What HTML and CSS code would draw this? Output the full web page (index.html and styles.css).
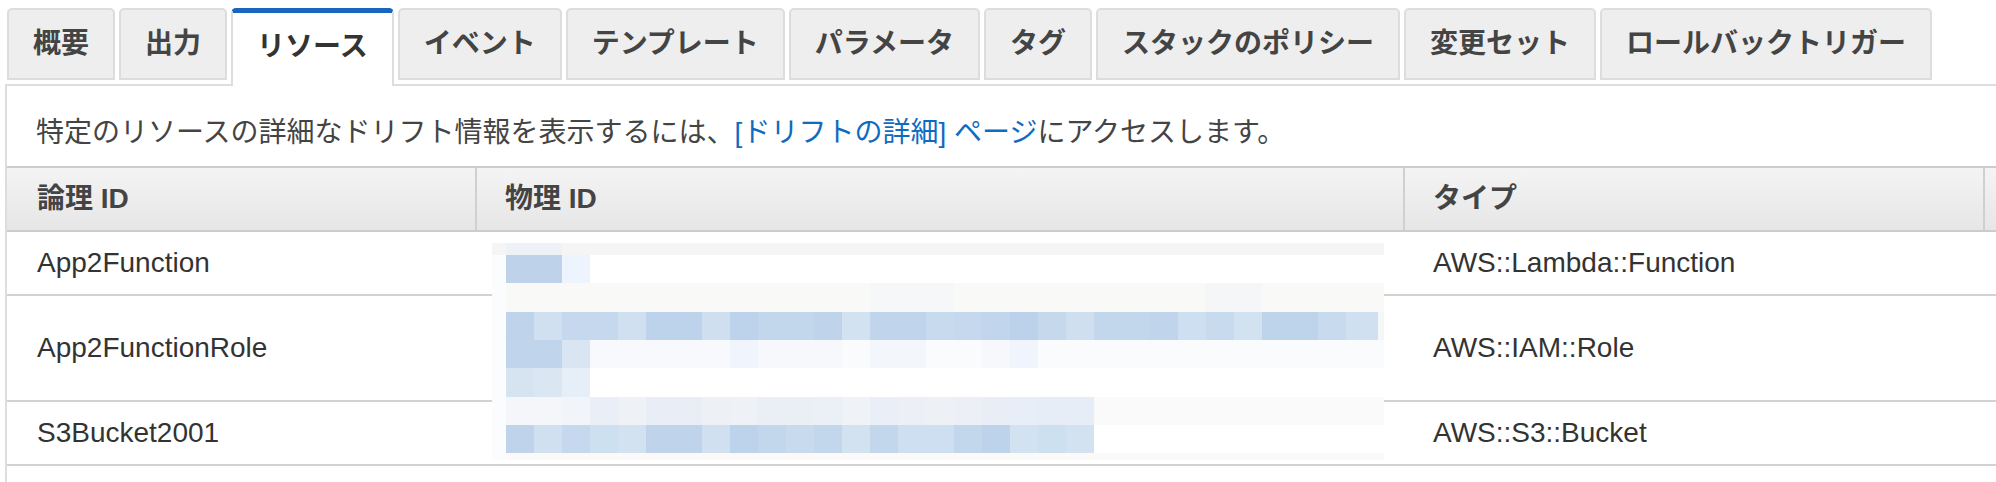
FILE: index.html
```html
<!DOCTYPE html>
<html lang="ja">
<head>
<meta charset="utf-8">
<title>リソース</title>
<link rel="stylesheet" href="styles.css">
</head>
<body>
<div class="tabs">
  <div class="tab">概要</div>
  <div class="tab">出力</div>
  <div class="tab active">リソース</div>
  <div class="tab">イベント</div>
  <div class="tab">テンプレート</div>
  <div class="tab">パラメータ</div>
  <div class="tab">タグ</div>
  <div class="tab">スタックのポリシー</div>
  <div class="tab">変更セット</div>
  <div class="tab">ロールバックトリガー</div>
</div>
<div class="panel">
  <p class="desc">特定のリソースの詳細なドリフト情報を表示するには、<a class="link" href="#">[ドリフトの詳細] ページ</a>にアクセスします。</p>
  <div class="table">
    <div class="row head">
      <div class="cell">論理 ID</div>
      <div class="cell">物理 ID</div>
      <div class="cell">タイプ</div>
      <div class="cell"></div>
    </div>
    <div class="row">
      <div class="cell">App2Function</div>
      <div class="cell"></div>
      <div class="cell">AWS::Lambda::Function</div>
      <div class="cell"></div>
    </div>
    <div class="row tall">
      <div class="cell">App2FunctionRole</div>
      <div class="cell"></div>
      <div class="cell">AWS::IAM::Role</div>
      <div class="cell"></div>
    </div>
    <div class="row">
      <div class="cell">S3Bucket2001</div>
      <div class="cell"></div>
      <div class="cell">AWS::S3::Bucket</div>
      <div class="cell"></div>
    </div>
    <svg class="redact" width="892" height="217" viewBox="0 0 892 217" aria-hidden="true">
      <rect x="0" y="0" width="892" height="217" fill="#ffffff"/>
      <rect x="0" y="12" width="14" height="205" fill="#fbfcfd"/>
      <rect x="0" y="0" width="892" height="12" fill="#f5f5f5"/>
      <rect x="14" y="0" width="56" height="12" fill="#eef2f7"/>
      <rect x="14" y="12" width="56" height="28" fill="#bed3ea"/>
      <rect x="70" y="12" width="28" height="28" fill="#eef4fd"/>
      <rect x="14" y="40" width="878" height="29" fill="#f9f9f8"/>
      <rect x="378" y="40" width="84" height="29" fill="#f6f7f9"/>
      <rect x="714" y="40" width="56" height="29" fill="#f5f6f8"/>
      <rect x="14" y="69" width="878" height="28" fill="#f5f6f8"/>
      <rect x="14" y="69" width="28" height="28" fill="#bfd4ea"/>
      <rect x="42" y="69" width="28" height="28" fill="#d0e0f0"/>
      <rect x="70" y="69" width="56" height="28" fill="#c5d8ee"/>
      <rect x="126" y="69" width="28" height="28" fill="#d0e0f0"/>
      <rect x="154" y="69" width="56" height="28" fill="#bdd3eb"/>
      <rect x="210" y="69" width="28" height="28" fill="#cfdff0"/>
      <rect x="238" y="69" width="28" height="28" fill="#bcd3eb"/>
      <rect x="266" y="69" width="56" height="28" fill="#c3d7ec"/>
      <rect x="322" y="69" width="28" height="28" fill="#bfd4ea"/>
      <rect x="350" y="69" width="28" height="28" fill="#d3e2f1"/>
      <rect x="378" y="69" width="56" height="28" fill="#c0d5eb"/>
      <rect x="434" y="69" width="28" height="28" fill="#c8daee"/>
      <rect x="462" y="69" width="28" height="28" fill="#c5d8ee"/>
      <rect x="490" y="69" width="28" height="28" fill="#c1d5ec"/>
      <rect x="518" y="69" width="28" height="28" fill="#bcd2ea"/>
      <rect x="546" y="69" width="28" height="28" fill="#c5d8ec"/>
      <rect x="574" y="69" width="28" height="28" fill="#cfdff0"/>
      <rect x="602" y="69" width="56" height="28" fill="#c2d6ec"/>
      <rect x="658" y="69" width="28" height="28" fill="#c0d5eb"/>
      <rect x="686" y="69" width="28" height="28" fill="#cddff0"/>
      <rect x="714" y="69" width="28" height="28" fill="#c8daee"/>
      <rect x="742" y="69" width="28" height="28" fill="#d3e2f1"/>
      <rect x="770" y="69" width="56" height="28" fill="#bed4ea"/>
      <rect x="826" y="69" width="28" height="28" fill="#c8daee"/>
      <rect x="854" y="69" width="32" height="28" fill="#d0e0f0"/>
      <rect x="14" y="97" width="878" height="28" fill="#fafbfd"/>
      <rect x="14" y="97" width="56" height="28" fill="#c0d5eb"/>
      <rect x="70" y="97" width="28" height="28" fill="#d9e5f2"/>
      <rect x="98" y="97" width="56" height="28" fill="#f8f9fc"/>
      <rect x="154" y="97" width="84" height="28" fill="#f7f9fc"/>
      <rect x="238" y="97" width="28" height="28" fill="#f0f5fd"/>
      <rect x="266" y="97" width="84" height="28" fill="#f6f8fc"/>
      <rect x="378" y="97" width="56" height="28" fill="#f3f6fa"/>
      <rect x="490" y="97" width="28" height="28" fill="#f6f8fc"/>
      <rect x="518" y="97" width="28" height="28" fill="#f0f4fc"/>
      <rect x="14" y="125" width="28" height="29" fill="#d6e3f1"/>
      <rect x="42" y="125" width="28" height="29" fill="#dae6f2"/>
      <rect x="70" y="125" width="28" height="29" fill="#e6eef8"/>
      <rect x="14" y="154" width="878" height="28" fill="#fafafa"/>
      <rect x="14" y="154" width="56" height="28" fill="#f4f6f9"/>
      <rect x="70" y="154" width="28" height="28" fill="#f1f4f8"/>
      <rect x="98" y="154" width="28" height="28" fill="#eaeff7"/>
      <rect x="126" y="154" width="28" height="28" fill="#eef2f7"/>
      <rect x="154" y="154" width="56" height="28" fill="#e9eef6"/>
      <rect x="210" y="154" width="28" height="28" fill="#edf1f6"/>
      <rect x="238" y="154" width="28" height="28" fill="#eef2f6"/>
      <rect x="266" y="154" width="56" height="28" fill="#eaeff6"/>
      <rect x="322" y="154" width="28" height="28" fill="#ebf0f6"/>
      <rect x="350" y="154" width="28" height="28" fill="#eff2f6"/>
      <rect x="378" y="154" width="28" height="28" fill="#eaeff7"/>
      <rect x="406" y="154" width="28" height="28" fill="#ecf0f6"/>
      <rect x="434" y="154" width="28" height="28" fill="#edf1f6"/>
      <rect x="462" y="154" width="28" height="28" fill="#ecf0f6"/>
      <rect x="490" y="154" width="28" height="28" fill="#e9eef6"/>
      <rect x="518" y="154" width="28" height="28" fill="#e8eef7"/>
      <rect x="546" y="154" width="56" height="28" fill="#e6edf6"/>
      <rect x="14" y="182" width="28" height="28" fill="#bfd4ea"/>
      <rect x="42" y="182" width="28" height="28" fill="#d0e0f0"/>
      <rect x="70" y="182" width="28" height="28" fill="#c5d8ee"/>
      <rect x="98" y="182" width="28" height="28" fill="#cde0f0"/>
      <rect x="126" y="182" width="28" height="28" fill="#d3e2f1"/>
      <rect x="154" y="182" width="56" height="28" fill="#bfd4ea"/>
      <rect x="210" y="182" width="28" height="28" fill="#d0e0f0"/>
      <rect x="238" y="182" width="28" height="28" fill="#bcd3eb"/>
      <rect x="266" y="182" width="28" height="28" fill="#c3d7ec"/>
      <rect x="294" y="182" width="28" height="28" fill="#c8daee"/>
      <rect x="322" y="182" width="28" height="28" fill="#c3d7ec"/>
      <rect x="350" y="182" width="28" height="28" fill="#d3e2f1"/>
      <rect x="378" y="182" width="28" height="28" fill="#c3d7ec"/>
      <rect x="406" y="182" width="56" height="28" fill="#cddff0"/>
      <rect x="462" y="182" width="28" height="28" fill="#c3d7ec"/>
      <rect x="490" y="182" width="28" height="28" fill="#bcd3eb"/>
      <rect x="518" y="182" width="28" height="28" fill="#d3e2f1"/>
      <rect x="546" y="182" width="28" height="28" fill="#cde0f0"/>
      <rect x="574" y="182" width="28" height="28" fill="#d3e2f1"/>
      <rect x="14" y="210" width="590" height="7" fill="#fbfaf9"/>
      <rect x="604" y="210" width="288" height="7" fill="#f9f9f9"/>
    </svg>
  </div>
</div>
</body>
</html>
```

FILE: styles.css
```css
html, body {
  margin: 0;
  padding: 0;
  background: #ffffff;
  overflow: hidden;
}

body {
  width: 1996px;
  height: 482px;
  font-family: "Liberation Sans", "Noto Sans CJK JP", sans-serif;
  color: #444444;
}

.tabs {
  display: flex;
  align-items: flex-start;
  gap: 4px;
  padding: 8px 0 0 7px;
}

.tab {
  box-sizing: border-box;
  height: 72px;
  margin-bottom: 4px;
  padding: 0 24px;
  display: flex;
  align-items: center;
  background: #eeeeee;
  border: 2px solid #dddddd;
  border-radius: 5px 5px 0 0;
  font-size: 28px;
  line-height: 40px;
  font-weight: bold;
  color: #444444;
  white-space: nowrap;
}

.tab.active {
  position: relative;
  z-index: 2;
  height: 78px;
  margin-bottom: -2px;
  padding-bottom: 5px;
  background: #ffffff;
  border-top: 5px solid #1a66bd;
  border-bottom: none;
  color: #333333;
}

.panel {
  margin-left: 5px;
  border-top: 2px solid #dddddd;
  border-left: 2px solid #dddddd;
  height: 400px;
  overflow: hidden;
}

.desc {
  margin: 0;
  padding: 27px 0 13px 29px;
  font-size: 28px;
  line-height: 40px;
  color: #444444;
  white-space: nowrap;
}

.link {
  color: #0f6bbf;
  text-decoration: none;
}

.table {
  position: relative;
}

.row {
  display: grid;
  grid-template-columns: 468px 928px 580px minmax(0, 1fr);
  height: 64px;
  border-bottom: 2px solid #d2d2d2;
  box-sizing: border-box;
}

.row.tall {
  height: 106px;
}

.row.head {
  height: 66px;
  border-top: 2px solid #cccccc;
  border-bottom: 2px solid #cccccc;
  background: linear-gradient(#f4f4f4, #e6e6e6);
}

.cell {
  display: flex;
  align-items: center;
  min-width: 0;
  overflow: hidden;
  padding-left: 28px;
  border-left: 2px solid transparent;
  font-size: 28px;
  line-height: 40px;
  color: #333333;
  white-space: nowrap;
}

.cell:empty {
  padding-left: 0;
}

.head .cell {
  font-weight: bold;
  color: #444444;
}

.head .cell + .cell {
  border-left-color: #d0d0d0;
}

.redact {
  position: absolute;
  left: 485px;
  top: 77px;
  display: block;
}
```
